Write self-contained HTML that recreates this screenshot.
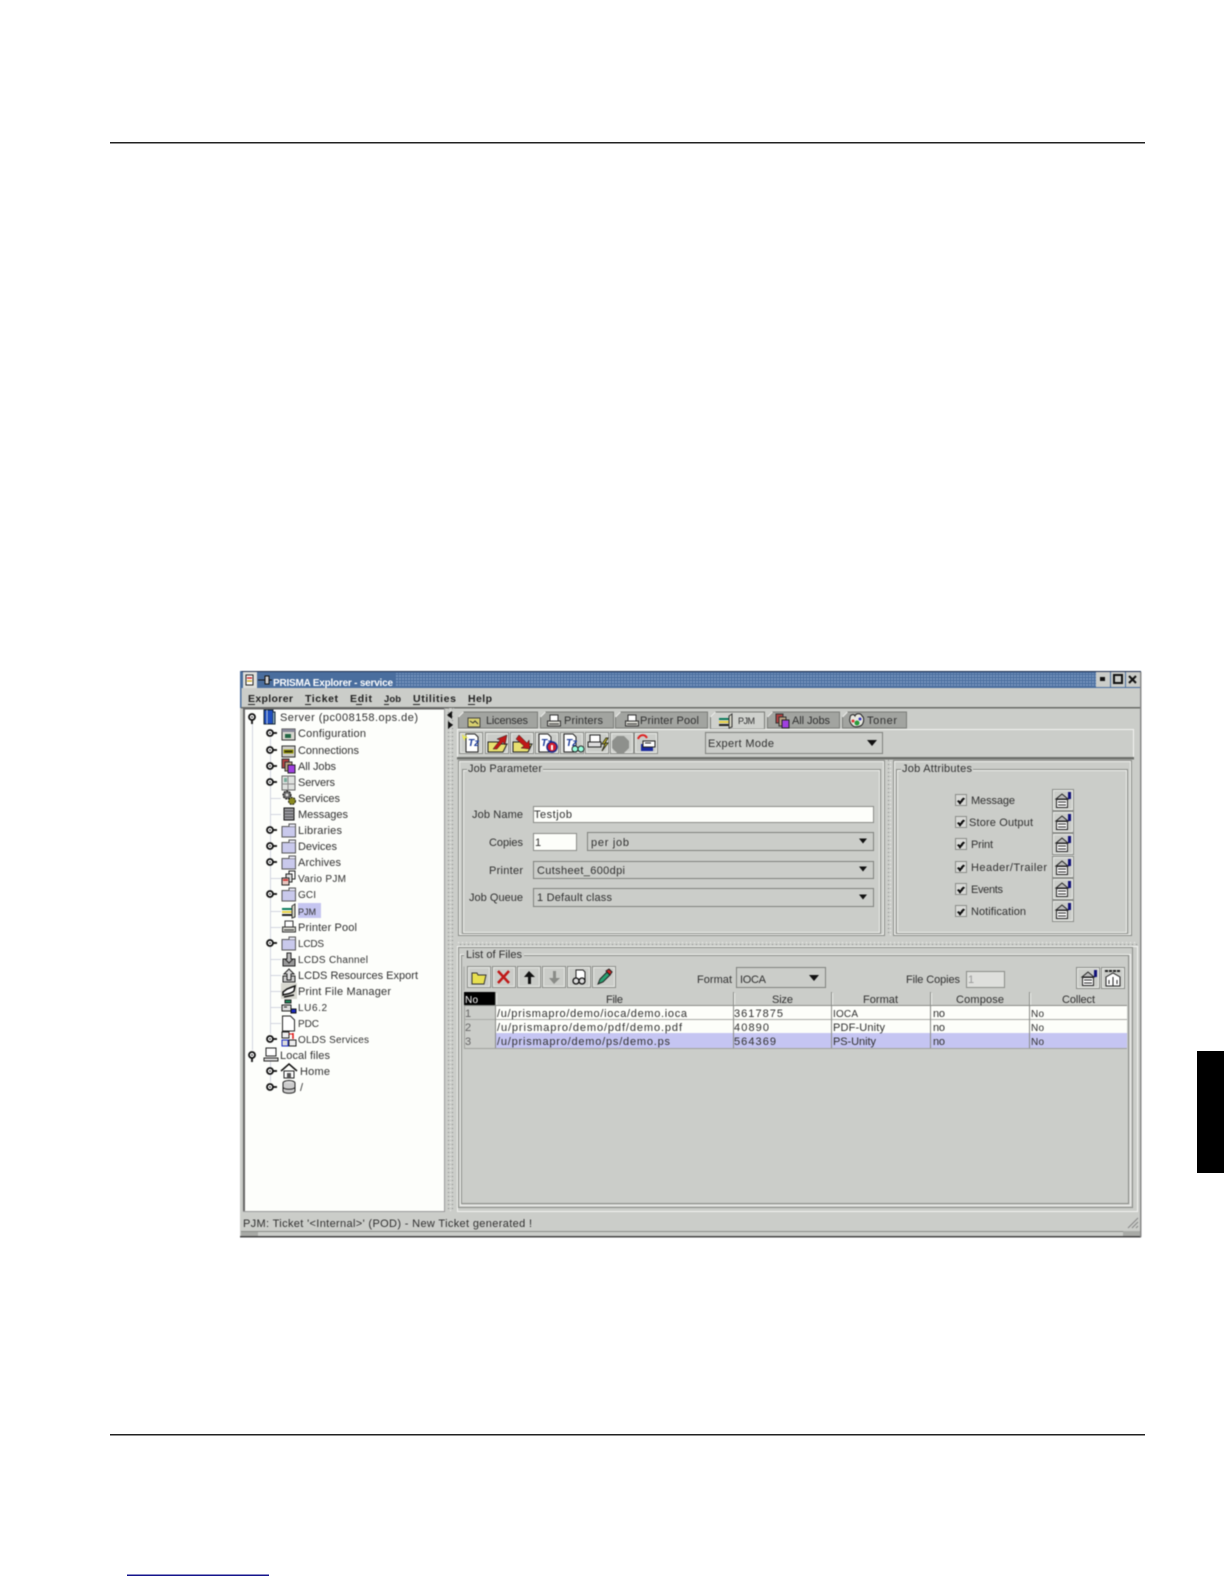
<!DOCTYPE html>
<html><head><meta charset="utf-8"><title>PRISMA Explorer</title>
<style>
html,body{margin:0;padding:0;background:#fff;width:1224px;height:1584px;overflow:hidden}
svg{display:block}
text{font-family:"Liberation Sans",sans-serif;font-size:11px;fill:#303030}
.m{font-weight:bold;fill:#222;font-size:10.5px}
.n{font-size:10px}
.w{filter:blur(.4px)}
.c{shape-rendering:crispEdges}
</style></head><body>
<svg width="1224" height="1584" viewBox="0 0 1224 1584" xmlns="http://www.w3.org/2000/svg">
<defs>
<pattern id="dots" width="3" height="3" patternUnits="userSpaceOnUse"><rect width="3" height="3" fill="#4a6e9e"/><rect width="2" height="2" fill="#7795bf"/></pattern>
<pattern id="vd" width="4" height="4" patternUnits="userSpaceOnUse"><rect width="4" height="4" fill="#cbcdc9"/><rect width="1" height="1" fill="#888"/><rect x="2" y="2" width="1" height="1" fill="#f4f4f2"/></pattern>
<g id="b24" class="c"><rect x=".5" y=".5" width="23" height="21" fill="#cbcdc9" stroke="#8a8c88"/><rect x="1.5" y="1.5" width="21" height="19" fill="none" stroke="#eceeea"/></g>
<g id="b22" class="c"><rect x=".5" y=".5" width="21" height="21" fill="#cbcdc9" stroke="#8a8c88"/><rect x="1.5" y="1.5" width="19" height="19" fill="none" stroke="#eceeea"/></g>
<g id="h"><circle cx="0" cy="0" r="3" fill="#fff" stroke="#111" stroke-width="1.800"/><circle r=".8" fill="#111"/><path d="M3 0h4" stroke="#111" stroke-width="1.800"/></g>
<g id="hd"><circle cx="0" cy="0" r="3" fill="#fff" stroke="#111" stroke-width="1.800"/><circle r=".8" fill="#111"/><path d="M0 3v4" stroke="#111" stroke-width="1.800"/></g>
<g id="fold"><path d="M1 4.500h13.500V15H1z" fill="#c9c9ec" stroke="#555"/><path d="M8 4.500V2h6.500v2.500" fill="#e6e6f6" stroke="#555"/></g>
<g id="doc"><path d="M3 1h9l3 3v15H3z" fill="#fff" stroke="#222"/><text x="5" y="13" style="font-size:10px;font-style:italic;fill:#1a3a9a;font-weight:bold">Tz</text></g>
<g id="note"><path d="M4 8l6-5 6 5z" fill="#bbb" stroke="#222"/><path d="M4.500 8.500h11v8h-11z" fill="#fff" stroke="#222"/><path d="M6 11h8M6 14h8" stroke="#222"/><path d="M16 1h3v7h-3z" fill="#12127a"/></g>
<path id="arr" d="M-5 -3h10l-5 6z" fill="#111"/>
<path id="arrs" d="M-4 -2.500h8l-4 5z" fill="#111"/>
<g id="chk" class="c"><rect x=".5" y=".5" width="11" height="11" fill="#d8d9d6" stroke="#8a8c88"/><path d="M3 6.500l2 2.500 4-5" fill="none" stroke="#111" stroke-width="2.200"/></g>
<g id="pjm"><path d="M1 5h10v2H1z" fill="#0a7a5a"/><path d="M1 8h10v2H1z" fill="#e8d040"/><path d="M1 11h10v2H1z" fill="#222"/><path d="M11 3l3-2v13l-3 1z" fill="#d8d8c8" stroke="#333"/></g>
<g id="prn"><path d="M4 2h8v6H4z" fill="#fff" stroke="#333"/><path d="M1.500 8h13v5h-13z" fill="#d8d8d0" stroke="#333"/><path d="M3 11h10" stroke="#333"/></g>
<g id="jobs"><path d="M1 1h7v9H1z" fill="#b04040" stroke="#333"/><path d="M4 4h7v9H4z" fill="#b8a080" stroke="#333"/><path d="M7 7h7v8H7z" fill="#a040e0" stroke="#222"/></g>
</defs>

<!-- page -->
<rect x="110" y="142" width="1035" height="1.500" fill="#222"/>
<rect x="110" y="1434" width="1035" height="1.500" fill="#222"/>
<rect x="1197" y="1051" width="27" height="122" fill="#000"/>
<rect x="127" y="1574.500" width="142" height="1.500" fill="#14148c"/>

<g class="w">
<!-- window -->
<rect x="240" y="671" width="901" height="566" fill="#cbcdc9"/>
<rect x="240" y="671" width="901" height="1" fill="#1f2f4f"/>
<rect x="240" y="671" width="1.500" height="37" fill="#4a6e9e"/>
<rect x="241" y="672" width="899" height="16" fill="#4a6e9e"/>
<rect x="396" y="673" width="700" height="14" fill="url(#dots)"/>
<rect x="243" y="672" width="14" height="16" fill="#dfe0dc"/>
<path d="M246 675h7v10h-7z" fill="#fff" stroke="#222"/><path d="M247 678h5" stroke="#c22" stroke-width="1.500"/><path d="M247 681h5" stroke="#ca2" stroke-width="1.500"/>
<path d="M258 680h8" stroke="#111"/><path d="M265 676h4v8h-4z" fill="#ccc" stroke="#111"/><path d="M269 680h3" stroke="#111"/>
<text x="273" y="686" textLength="120" lengthAdjust="spacing" style="font-weight:bold;fill:#fff;font-size:10px">PRISMA Explorer - service</text>
<g class="c">
<rect x="1096" y="672" width="14" height="15" fill="#cbcdc9"/><rect x="1100" y="677" width="5" height="4" fill="#111"/>
<rect x="1111" y="672" width="14" height="15" fill="#cbcdc9"/><rect x="1114" y="675" width="8" height="8" fill="none" stroke="#111" stroke-width="2"/>
<rect x="1126" y="672" width="14" height="15" fill="#cbcdc9"/>
</g>
<path d="M1129 676l7 7M1136 676l-7 7" stroke="#111" stroke-width="2"/>

<!-- menu -->
<rect x="241" y="707" width="899" height="1.500" fill="#6a6c68"/>
<text class="m" x="248" y="702" textLength="45" lengthAdjust="spacing">Explorer</text>
<text class="m" x="305" y="702" textLength="33" lengthAdjust="spacing">Ticket</text>
<text class="m" x="350" y="702" textLength="22" lengthAdjust="spacing">Edit</text>
<text class="m" x="384" y="702" textLength="17" lengthAdjust="spacing" style="font-size:9.5px">Job</text>
<text class="m" x="413" y="702" textLength="43" lengthAdjust="spacing">Utilities</text>
<text class="m" x="468" y="702" textLength="24" lengthAdjust="spacing">Help</text>
<g fill="#222" class="c"><rect x="248" y="704" width="7" height="1"/><rect x="305" y="704" width="6" height="1"/><rect x="356" y="704" width="6" height="1"/><rect x="384" y="704" width="5" height="1"/><rect x="413" y="704" width="7" height="1"/><rect x="468" y="704" width="7" height="1"/></g>

<!-- tree panel -->
<rect x="243" y="708" width="202" height="504" fill="#fdfefb"/>
<rect x="243" y="708" width="202" height="1.500" fill="#666"/>
<rect x="243" y="708" width="2" height="504" fill="#666"/>
<rect x="243" y="1211" width="202" height="1" fill="#999"/>
<rect x="444" y="708" width="1" height="504" fill="#999"/>
<g class="c" fill="#d2d5e0">
<rect x="252" y="722" width="1" height="328"/>
<rect x="270" y="738" width="1" height="296"/>
<rect x="270" y="1060" width="1" height="22"/>
<rect x="270" y="798" width="11" height="1"/><rect x="270" y="814" width="11" height="1"/><rect x="270" y="878" width="11" height="1"/><rect x="270" y="911" width="11" height="1"/><rect x="270" y="927" width="11" height="1"/><rect x="270" y="959" width="11" height="1"/><rect x="270" y="975" width="11" height="1"/><rect x="270" y="991" width="11" height="1"/><rect x="270" y="1007" width="11" height="1"/><rect x="270" y="1023" width="11" height="1"/>
</g>
<!-- handles -->
<use href="#hd" x="252" y="717"/><use href="#hd" x="252" y="1055"/>
<use href="#h" x="270" y="733"/><use href="#h" x="270" y="750"/><use href="#h" x="270" y="766"/><use href="#h" x="270" y="782"/><use href="#h" x="270" y="830"/><use href="#h" x="270" y="846"/><use href="#h" x="270" y="862"/><use href="#h" x="270" y="894"/><use href="#h" x="270" y="943"/><use href="#h" x="270" y="1039"/><use href="#h" x="270" y="1071"/><use href="#h" x="270" y="1087"/>
<!-- tree icons -->
<g transform="translate(263,709)"><path d="M1 1h9v14H1z" fill="#1f4fc0" stroke="#123"/><path d="M4 1v14" stroke="#bcd"/><path d="M10 3h2v12h-2" fill="#8ab" stroke="#123"/></g>
<g transform="translate(281,726)"><path d="M1 3h13v11H1z" fill="#d8d8d0" stroke="#333"/><path d="M1 3h13v3H1z" fill="#889"/><path d="M4 8h6v4H4z" fill="#264"/></g>
<g transform="translate(281,743)"><path d="M1 3h13v11H1z" fill="#cfcfc8" stroke="#333"/><path d="M3 7h9v3H3z" fill="#3a3a10" stroke="#990"/></g>
<use href="#jobs" transform="translate(281,758)"/>
<g transform="translate(281,775)"><path d="M1 1h13v14H1z" fill="#dfe2df" stroke="#666"/><path d="M7 1v14M1 9h13" stroke="#888"/><path d="M3 3h3v4H3z" fill="#7a9"/></g>
<g transform="translate(282,790)"><circle cx="5" cy="5" r="4" fill="#666" stroke="#111" stroke-dasharray="2 1"/><circle cx="10" cy="11" r="3.500" fill="#8a8a20" stroke="#111" stroke-dasharray="2 1"/><circle cx="5" cy="5" r="1.500" fill="#ddd"/></g>
<g transform="translate(282,806)"><path d="M2 2h10v12H2z" fill="#9a9aa0" stroke="#111"/><path d="M2 5h10M2 8h10M2 11h10" stroke="#555"/></g>
<use href="#fold" transform="translate(281,822)"/><use href="#fold" transform="translate(281,838)"/><use href="#fold" transform="translate(281,854)"/>
<g transform="translate(281,870)"><path d="M8 1h6v8H8z" fill="#fff" stroke="#222"/><path d="M5 4h6v8H5z" fill="#ddd" stroke="#222"/><path d="M1 8h7v7H1z" fill="#e8c8c0" stroke="#222"/><path d="M2 10h5" stroke="#c22" stroke-width="1.500"/></g>
<use href="#fold" transform="translate(281,886)"/>
<rect x="298" y="903" width="23" height="15" fill="#c5c5f0"/>
<use href="#pjm" transform="translate(281,903)"/>
<use href="#prn" transform="translate(281,919)"/>
<use href="#fold" transform="translate(281,935)"/>
<g transform="translate(281,951)"><path d="M2 8h12v7H2z" fill="#999" stroke="#222"/><path d="M6 2h4v6h2l-4 4-4-4h2z" fill="#bbb" stroke="#222"/></g>
<g transform="translate(281,967)"><path d="M2 9h12v6H2z" fill="#ccc" stroke="#222"/><path d="M6 13V7H3l5-5 5 5h-3v6z" fill="#ddd" stroke="#222"/></g>
<g transform="translate(281,983)"><rect x="0" y="0" width="16" height="16" fill="#d8d8d0"/><path d="M2 12c3-1 8-1 11-4l1-5-3 1-5 2-4 3z" fill="#fff" stroke="#111" stroke-width="1.500"/><path d="M3 14l10-2" stroke="#111" stroke-width="1.500"/></g>
<g transform="translate(281,999)"><path d="M1 6h9v6H1z" fill="#ddd" stroke="#222"/><path d="M4 1h6v3H4z" fill="#1a8a5a" stroke="#222"/><path d="M10 10h5v4h-5z" fill="#1a2ac0" stroke="#111"/><path d="M3 8h3" stroke="#222"/></g>
<path d="M282.500 1016h8l4 4v11h-12z" fill="#fff" stroke="#222"/>
<g transform="translate(281,1031)"><path d="M1 1h7v6H1z" fill="#eee" stroke="#222"/><path d="M8 9h7v6H8z" fill="#eee" stroke="#222"/><path d="M1 9h6v6H1z" fill="#ddd" stroke="#1a2ac0"/><path d="M12 2v6" stroke="#d11" stroke-width="1.500"/><path d="M8 3h4" stroke="#d11"/></g>
<g transform="translate(263,1047)"><path d="M3 1h10v8H3z" fill="#fff" stroke="#222"/><path d="M1 11h14v3H1z" fill="#ddd" stroke="#222"/></g>
<g transform="translate(281,1063)"><path d="M0 8l8-7 8 7" fill="none" stroke="#111" stroke-width="1.500"/><path d="M3 8h10v7H3z" fill="#fff" stroke="#222"/><path d="M6 10h4v5H6z" fill="#555"/></g>
<g transform="translate(281,1079)"><ellipse cx="8" cy="4" rx="6" ry="2.500" fill="#ddd" stroke="#222"/><path d="M2 4v8c0 3 12 3 12 0V4" fill="#ccc" stroke="#222"/><path d="M2 8c0 3 12 3 12 0" fill="none" stroke="#222"/></g>
<!-- tree text -->
<text x="280" y="721" textLength="138" lengthAdjust="spacing">Server (pc008158.ops.de)</text>
<text x="298" y="737" textLength="68" lengthAdjust="spacing">Configuration</text>
<text x="298" y="754" textLength="61" lengthAdjust="spacing">Connections</text>
<text x="298" y="770" textLength="38" lengthAdjust="spacing">All Jobs</text>
<text x="298" y="786" textLength="37" lengthAdjust="spacing">Servers</text>
<text x="298" y="802" textLength="42" lengthAdjust="spacing">Services</text>
<text x="298" y="818" textLength="50" lengthAdjust="spacing">Messages</text>
<text x="298" y="834" textLength="44" lengthAdjust="spacing">Libraries</text>
<text x="298" y="850" textLength="39" lengthAdjust="spacing">Devices</text>
<text x="298" y="866" textLength="43" lengthAdjust="spacing">Archives</text>
<text class="n" x="298" y="882" textLength="48" lengthAdjust="spacing">Vario PJM</text>
<text class="n" x="298" y="898" textLength="18" lengthAdjust="spacing">GCI</text>
<text class="n" x="298" y="915" textLength="18" lengthAdjust="spacing" style="font-size:9px">PJM</text>
<text x="298" y="931" textLength="59" lengthAdjust="spacing">Printer Pool</text>
<text class="n" x="298" y="947" textLength="26" lengthAdjust="spacing">LCDS</text>
<text class="n" x="298" y="963" textLength="70" lengthAdjust="spacing">LCDS Channel</text>
<text x="298" y="979" textLength="120" lengthAdjust="spacing">LCDS Resources Export</text>
<text x="298" y="995" textLength="93" lengthAdjust="spacing">Print File Manager</text>
<text class="n" x="298" y="1011" textLength="29" lengthAdjust="spacing">LU6.2</text>
<text class="n" x="298" y="1027" textLength="21" lengthAdjust="spacing">PDC</text>
<text class="n" x="298" y="1043" textLength="71" lengthAdjust="spacing">OLDS Services</text>
<text x="280" y="1059" textLength="50" lengthAdjust="spacing">Local files</text>
<text x="300" y="1075" textLength="30" lengthAdjust="spacing">Home</text>
<text x="300" y="1091">/</text>

<!-- vertical splitter -->
<rect x="448" y="708" width="6" height="504" fill="url(#vd)"/>
<path d="M452 711v8l-5-4z" fill="#111"/><path d="M448 721v8l5-4z" fill="#111"/>

<!-- tabs -->
<g stroke="#7a7c78" stroke-width="1">
<path d="M458.500 728v-11l5-5h74v16z" fill="#a2a4a0"/>
<path d="M540.500 728v-11l5-5h68v16z" fill="#a2a4a0"/>
<path d="M615.500 728v-11l5-5h87v16z" fill="#a2a4a0"/>
<path d="M767.500 728v-11l5-5h67v16z" fill="#a2a4a0"/>
<path d="M842.500 728v-11l5-5h59v16z" fill="#a2a4a0"/>
<path d="M710.500 729v-12l5-5h49v17z" fill="#cfd1cd"/>
</g>
<path d="M458.500 717l5-5M540.500 717l5-5M615.500 717l5-5M710.500 717l5-5M767.500 717l5-5M842.500 717l5-5" stroke="#f4f4f2"/>
<g transform="translate(467,714)"><path d="M1 4h12v9H1z" fill="#d8d070" stroke="#444"/><path d="M3 7l3 2 2-2 3 3" fill="none" stroke="#333"/></g>
<g transform="translate(546,713)"><use href="#prn"/></g>
<g transform="translate(624,713)"><use href="#prn"/></g>
<g transform="translate(718,713)"><use href="#pjm"/></g>
<g transform="translate(775,713)"><use href="#jobs"/></g>
<g transform="translate(849,713)"><path d="M1 5c0-4 4-4 5-2 1-3 6-3 7 0 2 1 2 5 1 7-1 4-9 5-11 2-2-2-3-5-2-7z" fill="#e8e8e0" stroke="#222"/><circle cx="8" cy="10" r="2.500" fill="#2a9a3a"/><circle cx="4" cy="8" r="1.500" fill="#d33"/><circle cx="11" cy="6" r="1.500" fill="#33b"/></g>
<text x="486" y="724" textLength="42" lengthAdjust="spacing">Licenses</text>
<text x="564" y="724" textLength="39" lengthAdjust="spacing">Printers</text>
<text x="640" y="724" textLength="59" lengthAdjust="spacing">Printer Pool</text>
<text x="738" y="724" textLength="17" lengthAdjust="spacing" style="font-size:9px">PJM</text>
<text x="792" y="724" textLength="38" lengthAdjust="spacing">All Jobs</text>
<text x="867" y="724" textLength="30" lengthAdjust="spacing">Toner</text>

<!-- toolbar -->
<g class="c">
<rect x="457" y="729" width="677" height="1" fill="#f2f3f0"/>
<rect x="457" y="729" width="1" height="28" fill="#f2f3f0"/>
<rect x="1133" y="729" width="1" height="28" fill="#f2f3f0"/>
<rect x="457" y="757" width="677" height="2.500" fill="#6e706c"/>
</g>
<use href="#b24" x="459" y="732"/><use href="#b24" x="485" y="732"/><use href="#b24" x="510" y="732"/><use href="#b24" x="535" y="732"/><use href="#b24" x="560" y="732"/><use href="#b24" x="585" y="732"/><use href="#b24" x="610" y="732"/><use href="#b24" x="634" y="732"/>
<use href="#doc" transform="translate(463,733)"/><path d="M462 734l3 3 2-4-1 4 3 1-4 0 0 3-2-3z" fill="#ee4"/>
<g transform="translate(487,734)"><path d="M1 8h10l3 2 6 0-4 8H1z" fill="#e8e070" stroke="#222"/><path d="M6 15l7-9-3-1 10-4-2 10-2-3-6 7z" fill="#c01818" stroke="#222" stroke-width=".5"/></g>
<g transform="translate(512,734)"><path d="M1 8h10l3 2 6 0-4 8H1z" fill="#e8e070" stroke="#222"/><path d="M7 1l8 8 2-3 1 9-9-1 3-2-8-7z" fill="#c01818" stroke="#222" stroke-width=".5"/></g>
<use href="#doc" transform="translate(536,733)"/><circle cx="552" cy="747" r="5" fill="#d41c2c" stroke="#1a2a8a" stroke-width="1.500"/><rect x="551" y="745" width="2" height="5" fill="#fff"/>
<use href="#doc" transform="translate(561,733)"/><circle cx="575" cy="749" r="3" fill="#9fd" stroke="#222"/><circle cx="581" cy="749" r="3" fill="#9fd" stroke="#222"/>
<g transform="translate(587,734)"><path d="M3 1h10v7H3z" fill="#fff" stroke="#222"/><path d="M1 8h13v5H1z" fill="#ddd" stroke="#222"/><path d="M19 4l-4 6h3l-3 7 6-8h-3l3-5z" fill="#e8d820" stroke="#332"/></g>
<path d="M617 736h7l5 5v7l-5 5h-7l-5-5v-7z" fill="#8e908c"/>
<g transform="translate(636,733)"><path d="M2 6c2-5 7-5 9-1" fill="none" stroke="#d22" stroke-width="2"/><path d="M5 11h12v7H5z" fill="#1a2aa0"/><path d="M7 8h12v6H7z" fill="#fff" stroke="#222"/><path d="M9 10h6" stroke="#222"/></g>
<!-- expert mode combo -->
<rect x="705.500" y="732.500" width="177" height="21" fill="#cbcdc9" stroke="#7f817d" class="c"/>
<text x="708" y="747" textLength="66" lengthAdjust="spacing">Expert Mode</text>
<use href="#arr" x="872" y="743"/>

<!-- job parameter panel -->
<g fill="none" class="c">
<rect x="458.500" y="760.500" width="426" height="175" stroke="#8a8c88"/>
<rect x="459.500" y="761.500" width="424" height="173" stroke="#f2f3f0"/>
<rect x="462.500" y="769.500" width="418" height="164" stroke="#8a8c88"/>
<rect x="463.500" y="770.500" width="416" height="162" stroke="#f2f3f0"/>
<rect x="893.500" y="760.500" width="238" height="175" stroke="#8a8c88"/>
<rect x="894.500" y="761.500" width="236" height="173" stroke="#f2f3f0"/>
<rect x="896.500" y="769.500" width="231" height="164" stroke="#8a8c88"/>
<rect x="897.500" y="770.500" width="229" height="162" stroke="#f2f3f0"/>
</g>
<rect x="887" y="760" width="4" height="176" fill="url(#vd)"/>
<rect x="467" y="762" width="76" height="10" fill="#cbcdc9"/>
<rect x="901" y="762" width="72" height="10" fill="#cbcdc9"/>
<text x="468" y="772" textLength="74" lengthAdjust="spacing">Job Parameter</text>
<text x="902" y="772" textLength="70" lengthAdjust="spacing">Job Attributes</text>

<text x="472" y="818" textLength="51" lengthAdjust="spacing">Job Name</text>
<text x="489" y="846" textLength="34" lengthAdjust="spacing">Copies</text>
<text x="489" y="874" textLength="34" lengthAdjust="spacing">Printer</text>
<text x="469" y="901" textLength="54" lengthAdjust="spacing">Job Queue</text>
<g class="c">
<rect x="533.500" y="806.500" width="340" height="16" fill="#fdfefa" stroke="#8a8c88"/>
<rect x="533.500" y="833.500" width="43" height="17" fill="#fdfefa" stroke="#8a8c88"/>
<rect x="587.500" y="832.500" width="286" height="18" fill="#cbcdc9" stroke="#7f817d"/>
<rect x="533.500" y="861.500" width="340" height="17" fill="#cbcdc9" stroke="#7f817d"/>
<rect x="533.500" y="888.500" width="340" height="18" fill="#cbcdc9" stroke="#7f817d"/>
</g>
<text x="534" y="818" textLength="38" lengthAdjust="spacing">Testjob</text>
<text x="535" y="846">1</text>
<text x="591" y="846" textLength="38" lengthAdjust="spacing">per job</text>
<text x="537" y="874" textLength="88" lengthAdjust="spacing">Cutsheet_600dpi</text>
<text x="537" y="901" textLength="75" lengthAdjust="spacing">1 Default class</text>
<use href="#arrs" x="863" y="841"/><use href="#arrs" x="863" y="869"/><use href="#arrs" x="863" y="897"/>

<!-- job attributes -->
<use href="#chk" x="955" y="794"/><use href="#chk" x="955" y="816"/><use href="#chk" x="955" y="838"/><use href="#chk" x="955" y="861"/><use href="#chk" x="955" y="883"/><use href="#chk" x="955" y="905"/>
<text x="971" y="804" textLength="44" lengthAdjust="spacing">Message</text>
<text x="969" y="826" textLength="64" lengthAdjust="spacing">Store Output</text>
<text x="971" y="848" textLength="22" lengthAdjust="spacing">Print</text>
<text x="971" y="871" textLength="76" lengthAdjust="spacing">Header/Trailer</text>
<text x="971" y="893" textLength="32" lengthAdjust="spacing">Events</text>
<text x="971" y="915" textLength="55" lengthAdjust="spacing">Notification</text>
<use href="#b22" x="1052" y="789"/><use href="#b22" x="1052" y="811"/><use href="#b22" x="1052" y="833"/><use href="#b22" x="1052" y="856"/><use href="#b22" x="1052" y="878"/><use href="#b22" x="1052" y="900"/>
<use href="#note" transform="translate(1052,791)"/><use href="#note" transform="translate(1052,813)"/><use href="#note" transform="translate(1052,835)"/><use href="#note" transform="translate(1052,858)"/><use href="#note" transform="translate(1052,880)"/><use href="#note" transform="translate(1052,902)"/>

<!-- horizontal splitter -->
<rect x="457" y="941" width="681" height="4" fill="url(#vd)"/>

<!-- list of files panel -->
<g fill="none" class="c">
<rect x="457.500" y="946.500" width="680" height="265" stroke="#f2f3f0"/>
<rect x="458.500" y="947.500" width="674" height="260" stroke="#8a8c88"/>
<rect x="460.500" y="954.500" width="670" height="251" stroke="#f2f3f0"/>
<rect x="461.500" y="955.500" width="667" height="248" stroke="#8a8c88"/>
</g>
<rect x="464" y="948" width="60" height="11" fill="#cbcdc9"/>
<text x="466" y="958" textLength="56" lengthAdjust="spacing">List of Files</text>
<rect x="463.500" y="966.500" width="1" height="24" fill="#a8aaa6" class="c"/>
<use href="#b24" x="467" y="966"/><use href="#b24" x="492" y="966"/><use href="#b24" x="517" y="966"/><use href="#b24" x="542" y="966"/><use href="#b24" x="567" y="966"/><use href="#b24" x="592" y="966"/>
<path d="M472 973h5l1 2h8l-2 9h-12z" fill="#e8e050" stroke="#333"/>
<path d="M498 971l11 12M509 971l-11 12" stroke="#c01818" stroke-width="2.500"/>
<path d="M529 971l6 6h-4v7h-3v-7h-4z" fill="#111"/>
<path d="M554 984l6-6h-4v-7h-3v7h-4z" fill="#8a8c88"/>
<g transform="translate(573,969)"><path d="M3 1h7l2 2v8H3z" fill="#fff" stroke="#222"/><circle cx="3" cy="12" r="3" fill="#ddd" stroke="#111" stroke-width="1.300"/><circle cx="9" cy="12" r="3" fill="#ddd" stroke="#111" stroke-width="1.300"/></g>
<path d="M598 984l2-5 7-7 3 3-7 7z" fill="#2aa070" stroke="#222"/><path d="M606 971l3-2 3 3-2 3z" fill="#d02020" stroke="#222"/>
<text x="697" y="983" textLength="35" lengthAdjust="spacing">Format</text>
<rect x="736.500" y="967.500" width="89" height="20" fill="#cbcdc9" stroke="#7f817d" class="c"/>
<text x="740" y="983" textLength="26" lengthAdjust="spacing">IOCA</text>
<use href="#arr" x="814" y="978"/>
<text x="906" y="983" textLength="54" lengthAdjust="spacing">File Copies</text>
<rect x="966.500" y="971.500" width="38" height="16" fill="#dedfdc" stroke="#8a8c88" class="c"/>
<text x="968" y="983" style="fill:#999">1</text>
<use href="#b24" x="1076" y="967"/><use href="#b24" x="1101" y="967"/>
<use href="#note" transform="translate(1078,969)"/>
<g transform="translate(1104,969)"><path d="M2 8l7-4 7 4v9H2z" fill="#fff" stroke="#222"/><path d="M1 2h16" stroke="#222" stroke-dasharray="3 1" stroke-width="2"/><path d="M9 8v9M5 11v4M13 11v4" stroke="#222"/></g>

<!-- table -->
<g class="c">
<rect x="464" y="992" width="663" height="14" fill="#cbcdc9"/>
<rect x="464" y="992" width="31" height="14" fill="#000"/>
<rect x="464" y="1005" width="663" height="1.500" fill="#8a8c88"/>
<rect x="464" y="1006" width="31" height="42" fill="#cbcdc9"/>
<rect x="495" y="1006" width="632" height="14" fill="#fdfefa"/>
<rect x="495" y="1020" width="632" height="13" fill="#fdfefa"/>
<rect x="495" y="1033" width="632" height="15" fill="#c5c5f2"/>
<rect x="464" y="1019" width="663" height="1" fill="#a8aaa6"/>
<rect x="464" y="1048" width="663" height="1" fill="#a0a29e"/>
<rect x="464" y="1006" width="1" height="42" fill="#a0a29e"/>
<g fill="#8a8c88"><rect x="495" y="992" width="1" height="56"/><rect x="733" y="992" width="1" height="56"/><rect x="831" y="992" width="1" height="56"/><rect x="930" y="992" width="1" height="56"/><rect x="1029" y="992" width="1" height="56"/></g>
<g fill="#f2f3f0"><rect x="496" y="993" width="1" height="12"/><rect x="734" y="993" width="1" height="12"/><rect x="832" y="993" width="1" height="12"/><rect x="931" y="993" width="1" height="12"/><rect x="1030" y="993" width="1" height="12"/></g>
</g>
<text x="465" y="1003" textLength="13" lengthAdjust="spacing" style="fill:#fff;font-size:10px">No</text>
<text x="606" y="1003" textLength="17" lengthAdjust="spacing">File</text>
<text x="772" y="1003" textLength="21" lengthAdjust="spacing">Size</text>
<text x="863" y="1003" textLength="35" lengthAdjust="spacing">Format</text>
<text x="956" y="1003" textLength="48" lengthAdjust="spacing">Compose</text>
<text x="1062" y="1003" textLength="33" lengthAdjust="spacing">Collect</text>

<text x="465" y="1017" style="fill:#666">1</text><text x="465" y="1031" style="fill:#666">2</text><text x="465" y="1045" style="fill:#666">3</text>
<text x="497" y="1017" textLength="190" lengthAdjust="spacing">/u/prismapro/demo/ioca/demo.ioca</text>
<text x="497" y="1031" textLength="185" lengthAdjust="spacing">/u/prismapro/demo/pdf/demo.pdf</text>
<text x="497" y="1045" textLength="173" lengthAdjust="spacing">/u/prismapro/demo/ps/demo.ps</text>
<text x="734" y="1017" textLength="49" lengthAdjust="spacing">3617875</text>
<text x="734" y="1031" textLength="35" lengthAdjust="spacing">40890</text>
<text x="734" y="1045" textLength="42" lengthAdjust="spacing">564369</text>
<text x="833" y="1017" textLength="25" lengthAdjust="spacing" class="n">IOCA</text>
<text x="833" y="1031" textLength="52" lengthAdjust="spacing">PDF-Unity</text>
<text x="833" y="1045" textLength="43" lengthAdjust="spacing">PS-Unity</text>
<text x="933" y="1017" textLength="12" lengthAdjust="spacing">no</text>
<text x="933" y="1031" textLength="12" lengthAdjust="spacing">no</text>
<text x="933" y="1045" textLength="12" lengthAdjust="spacing">no</text>
<text x="1031" y="1017" textLength="13" lengthAdjust="spacing" class="n">No</text>
<text x="1031" y="1031" textLength="13" lengthAdjust="spacing" class="n">No</text>
<text x="1031" y="1045" textLength="13" lengthAdjust="spacing" class="n">No</text>

<!-- status -->
<text x="243" y="1227" textLength="289" lengthAdjust="spacing">PJM: Ticket '&lt;Internal&gt;' (POD) - New Ticket generated !</text>
<path d="M1128 1228l10-10M1132 1228l6-6M1136 1228l2-2" stroke="#888"/>
<g class="c">
<rect x="241" y="1231" width="899" height="1" fill="#8a8c88"/>
<rect x="241" y="1232" width="17" height="4" fill="#a8aaa6"/>
<rect x="1123" y="1231" width="17" height="5" fill="#a8aaa6"/>
<rect x="240" y="1236" width="901" height="1.500" fill="#444"/>
<rect x="1140" y="672" width="1.500" height="565" fill="#888"/>
</g>
</g>
</svg>
</body></html>
